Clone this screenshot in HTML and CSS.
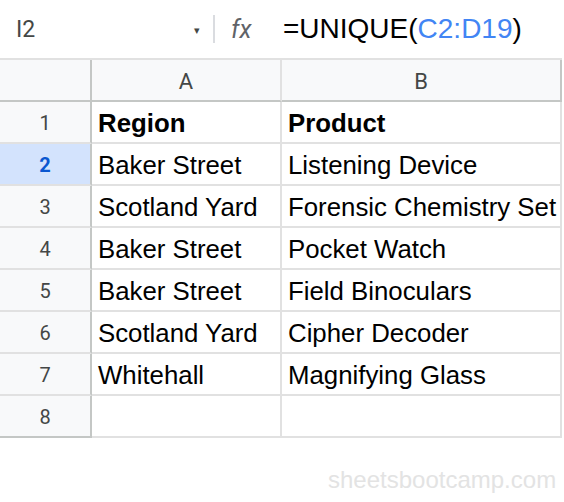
FILE: index.html
```html
<!DOCTYPE html>
<html>
<head>
<meta charset="utf-8">
<link rel="stylesheet" href="styles.css">
</head>
<body>
<div class="formula-bar">
  <div class="name-box">I2</div>
  <div class="caret">&#9662;</div>
  <div class="divider"></div>
  <div class="fx">fx</div>
  <div class="formula">=UNIQUE(<span class="ref">C2:D19</span>)</div>
</div>
<div class="sheet">
  <div class="corner"></div>
  <div class="colhead">A</div>
  <div class="colhead last">B</div>

  <div class="rowhead">1</div>
  <div class="cell bold">Region</div>
  <div class="cell bold">Product</div>

  <div class="rowhead active">2</div>
  <div class="cell">Baker Street</div>
  <div class="cell">Listening Device</div>

  <div class="rowhead">3</div>
  <div class="cell">Scotland Yard</div>
  <div class="cell">Forensic Chemistry Set</div>

  <div class="rowhead">4</div>
  <div class="cell">Baker Street</div>
  <div class="cell">Pocket Watch</div>

  <div class="rowhead">5</div>
  <div class="cell">Baker Street</div>
  <div class="cell">Field Binoculars</div>

  <div class="rowhead">6</div>
  <div class="cell">Scotland Yard</div>
  <div class="cell">Cipher Decoder</div>

  <div class="rowhead">7</div>
  <div class="cell">Whitehall</div>
  <div class="cell">Magnifying Glass</div>

  <div class="rowhead lastrow">8</div>
  <div class="cell"></div>
  <div class="cell"></div>
</div>
<div class="watermark">sheetsbootcamp.com</div>
</body>
</html>
```
FILE: styles.css
```css
* { box-sizing: border-box; }
html, body {
  margin: 0;
  padding: 0;
  background: #ffffff;
  width: 564px;
  height: 502px;
  overflow: hidden;
}
body {
  font-family: "Liberation Sans", Arial, sans-serif;
  color: #000;
}
.formula-bar {
  height: 58px;
  display: flex;
  align-items: center;
}
.name-box {
  font-family: Roboto, "Liberation Sans", sans-serif;
  font-size: 23px;
  color: #444746;
  padding-left: 16px;
  width: 194px;
}
.caret {
  font-size: 11px;
  color: #444746;
  width: 19px;
  margin-top: 2px;
}
.divider {
  width: 2px;
  height: 28px;
  background: #dadce0;
}
.fx {
  font-family: Roboto, "Liberation Sans", sans-serif;
  font-style: italic;
  font-size: 25px;
  color: #5f6368;
  margin-left: 16px;
  width: 52px;
}
.formula {
  font-size: 28px;
  color: #000;
}
.ref { color: #4285f4; }
.sheet {
  display: grid;
  grid-template-columns: 92px 190px 280px;
  grid-template-rows: repeat(9, 42px);
  border-top: 2px solid #e1e1e1;
  width: 562px;
}
.corner, .colhead {
  background: #f8f9fa;
  border-bottom: 2px solid #c4c7c5;
  border-right: 2px solid #e1e1e1;
}
.corner { border-right: 2px solid #c4c7c5; }
.colhead {
  font-family: Roboto, "Liberation Sans", sans-serif;
  font-size: 22px;
  color: #444746;
  display: flex;
  align-items: center;
  justify-content: center;
  padding-top: 2px;
}
.colhead.last { border-right: 2px solid #c4c7c5; }
.rowhead {
  background: #f8f9fa;
  border-right: 2px solid #c4c7c5;
  border-bottom: 2px solid #e1e1e1;
  font-family: Roboto, "Liberation Sans", sans-serif;
  font-size: 20px;
  color: #444746;
  display: flex;
  align-items: center;
  justify-content: center;
  padding-top: 2px;
}
.rowhead.lastrow { border-bottom: 2px solid #c4c7c5; }
.rowhead.active {
  background: #d3e3fd;
  color: #0b57d0;
  font-weight: bold;
}
.cell {
  border-right: 2px solid #e1e1e1;
  border-bottom: 2px solid #e1e1e1;
  font-size: 25.8px;
  padding-left: 6px;
  display: flex;
  align-items: center;
  padding-top: 2px;
  white-space: nowrap;
  overflow: hidden;
}
.cell.bold { font-weight: bold; }
.watermark {
  position: absolute;
  left: 328px;
  top: 466px;
  font-size: 24px;
  color: #e3e3e3;
}
```
